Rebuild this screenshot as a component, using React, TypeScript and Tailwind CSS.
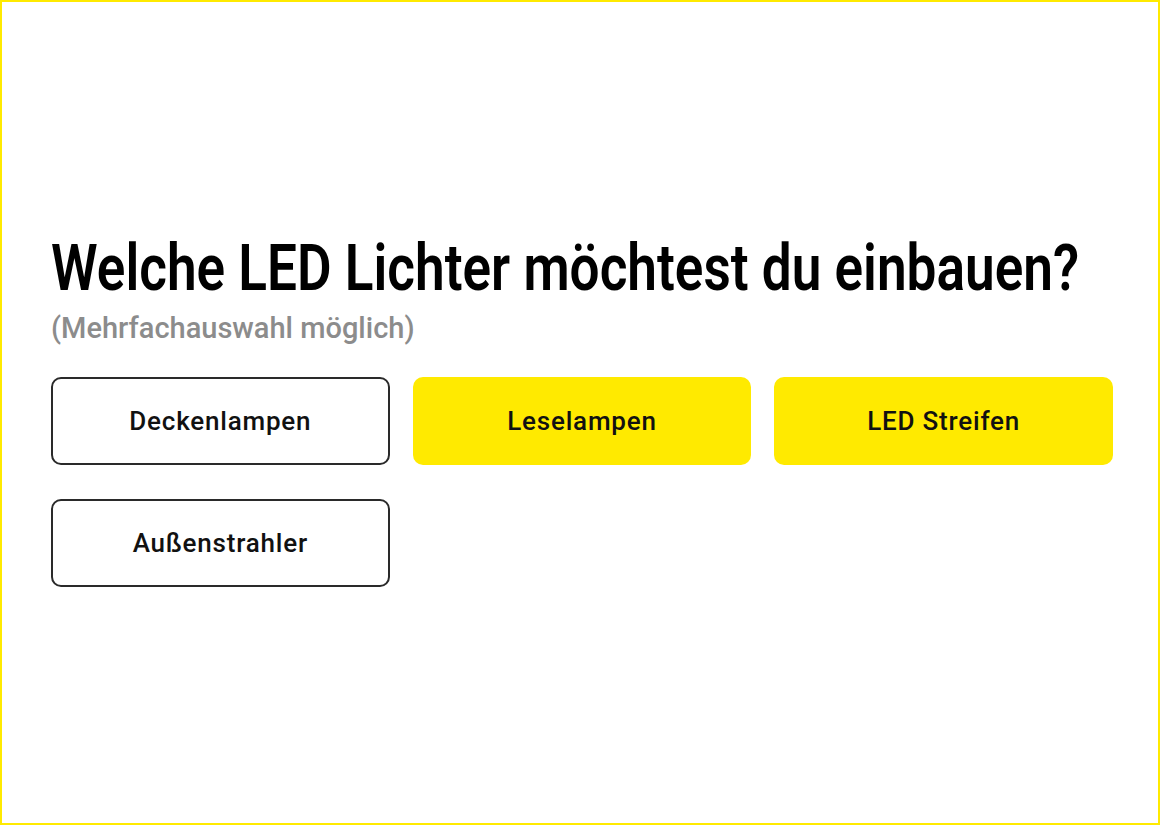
import { useState } from 'react'

const options = ['Deckenlampen', 'Leselampen', 'LED Streifen', 'Außenstrahler']

export default function App() {
  const [selected, setSelected] = useState<string[]>(['Leselampen', 'LED Streifen'])

  const toggle = (name: string) => {
    setSelected((prev) => (prev.includes(name) ? prev.filter((n) => n !== name) : [...prev, name]))
  }

  return (
    <div
      className="h-[825px] w-full border-2 border-[#ffea00] bg-white flex flex-col px-[49px] pt-[235px]"
      style={{ fontFamily: 'Roboto, "Liberation Sans", sans-serif' }}
    >
      <h1 className="w-max origin-left scale-x-[0.83] whitespace-nowrap text-[64px] leading-[64px] font-semibold text-black">
        Welche LED Lichter möchtest du einbauen?
      </h1>
      <p className="mt-[9px] text-[29px] leading-[36px] font-medium text-[#8c8c8c]">(Mehrfachauswahl möglich)</p>
      <div className="mt-[31px] grid grid-cols-3 gap-x-[23px] gap-y-[34px] w-[1062px]">
        {options.map((name) => {
          const active = selected.includes(name)
          return (
            <button
              key={name}
              type="button"
              onClick={() => toggle(name)}
              className={`h-[88px] rounded-[10px] text-[26px] tracking-[0.8px] font-medium text-[#111] ${
                active ? 'bg-[#ffea00]' : 'bg-white border-2 border-[#2a2a2a]'
              }`}
            >
              {name}
            </button>
          )
        })}
      </div>
    </div>
  )
}
